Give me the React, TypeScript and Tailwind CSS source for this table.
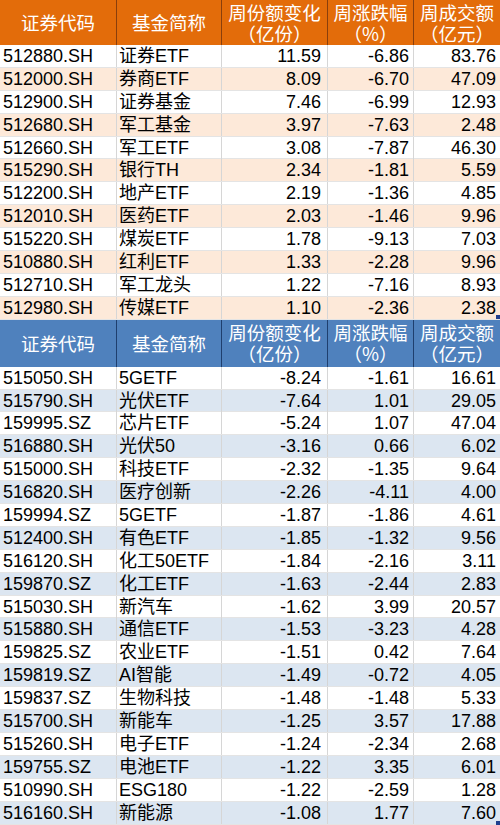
import React from "react";

type Row = [string, string, string, string, string];

const topRows: Row[] = [
  ["512880.SH", "证券ETF", "11.59", "-6.86", "83.76"],
  ["512000.SH", "券商ETF", "8.09", "-6.70", "47.09"],
  ["512900.SH", "证券基金", "7.46", "-6.99", "12.93"],
  ["512680.SH", "军工基金", "3.97", "-7.63", "2.48"],
  ["512660.SH", "军工ETF", "3.08", "-7.87", "46.30"],
  ["515290.SH", "银行TH", "2.34", "-1.81", "5.59"],
  ["512200.SH", "地产ETF", "2.19", "-1.36", "4.85"],
  ["512010.SH", "医药ETF", "2.03", "-1.46", "9.96"],
  ["515220.SH", "煤炭ETF", "1.78", "-9.13", "7.03"],
  ["510880.SH", "红利ETF", "1.33", "-2.28", "9.96"],
  ["512710.SH", "军工龙头", "1.22", "-7.16", "8.93"],
  ["512980.SH", "传媒ETF", "1.10", "-2.36", "2.38"],
];

const bottomRows: Row[] = [
  ["515050.SH", "5GETF", "-8.24", "-1.61", "16.61"],
  ["515790.SH", "光伏ETF", "-7.64", "1.01", "29.05"],
  ["159995.SZ", "芯片ETF", "-5.24", "1.07", "47.04"],
  ["516880.SH", "光伏50", "-3.16", "0.66", "6.02"],
  ["515000.SH", "科技ETF", "-2.32", "-1.35", "9.64"],
  ["516820.SH", "医疗创新", "-2.26", "-4.11", "4.00"],
  ["159994.SZ", "5GETF", "-1.87", "-1.86", "4.61"],
  ["512400.SH", "有色ETF", "-1.85", "-1.32", "9.56"],
  ["516120.SH", "化工50ETF", "-1.84", "-2.16", "3.11"],
  ["159870.SZ", "化工ETF", "-1.63", "-2.44", "2.83"],
  ["515030.SH", "新汽车", "-1.62", "3.99", "20.57"],
  ["515880.SH", "通信ETF", "-1.53", "-3.23", "4.28"],
  ["159825.SZ", "农业ETF", "-1.51", "0.42", "7.64"],
  ["159819.SZ", "AI智能", "-1.49", "-0.72", "4.05"],
  ["159837.SZ", "生物科技", "-1.48", "-1.48", "5.33"],
  ["515700.SH", "新能车", "-1.25", "3.57", "17.88"],
  ["515260.SH", "电子ETF", "-1.24", "-2.34", "2.68"],
  ["159755.SZ", "电池ETF", "-1.22", "3.35", "6.01"],
  ["510990.SH", "ESG180", "-1.22", "-2.59", "1.28"],
  ["516160.SH", "新能源", "-1.08", "1.77", "7.60"],
];

const heads = ["证券代码", "基金简称", "周份额变化\n（亿份）", "周涨跌幅\n（%）", "周成交额\n（亿元）"];

const cols = "grid grid-cols-[117px_105px_106px_86px_86px]";
const font = "font-['Liberation_Sans','Noto_Sans_CJK_SC',sans-serif]";

function Header({ tone }: { tone: "orange" | "blue" }) {
  const bg = tone === "orange" ? "bg-[#e36c0a] h-[45px]" : "bg-[#4f81bd] h-[47px]";
  const line = tone === "orange" ? "border-[#8a3f0c]" : "border-[#1f3f6e]";
  return (
    <div className={`${cols} ${bg} text-white text-[18.5px] font-['Noto_Sans_CJK_SC',sans-serif]`}>
      {heads.map((h) => (
        <div
          key={h}
          className={`flex items-center justify-center text-center whitespace-pre-line leading-[21px] border-r ${line} last:border-r-0`}
        >
          {h}
        </div>
      ))}
    </div>
  );
}

function Body({ rows, stripe }: { rows: Row[]; stripe: string }) {
  return (
    <div>
      {rows.map((r, i) => (
        <div
          key={r[0] + i}
          className={`${cols} h-[22.9px] text-[18px] leading-[22px] text-black border-b border-[#e4e4e4] ${i % 2 === 1 ? stripe : "bg-white"}`}
        >
          <div className="pl-[3px] border-r border-[#d6d6d6] whitespace-nowrap">{r[0]}</div>
          <div className="pl-[2px] border-r border-[#d6d6d6] whitespace-nowrap">{r[1]}</div>
          <div className="pr-[6px] text-right border-r border-[#d6d6d6]">{r[2]}</div>
          <div className="pr-[4px] text-right border-r border-[#d6d6d6]">{r[3]}</div>
          <div className="pr-[4px] text-right">{r[4]}</div>
        </div>
      ))}
    </div>
  );
}

export default function App() {
  return (
    <div className={`relative w-[500px] h-[825px] overflow-hidden bg-white ${font}`}>
      <Header tone="orange" />
      <Body rows={topRows} stripe="bg-[#fde9d9]" />
      <Header tone="blue" />
      <Body rows={bottomRows} stripe="bg-[#dce6f1]" />
      <div className="absolute left-[496px] top-[315px] w-[4px] h-[4px] bg-[#1f3f8e]" />
      <div className="absolute left-[496px] top-[821px] w-[4px] h-[4px] bg-[#1f3f8e]" />
    </div>
  );
}
